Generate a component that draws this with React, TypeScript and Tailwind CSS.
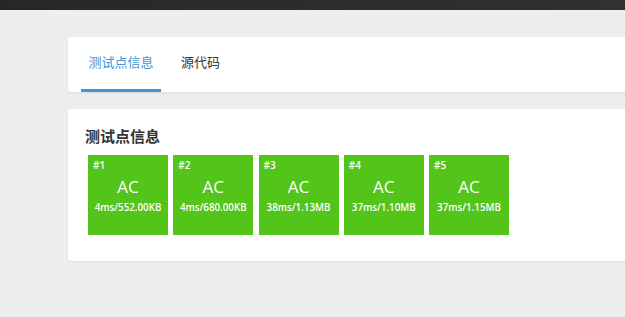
import React from "react";

const CASES = [
  { id: 1, status: "AC", info: "4ms/552.00KB" },
  { id: 2, status: "AC", info: "4ms/680.00KB" },
  { id: 3, status: "AC", info: "38ms/1.13MB" },
  { id: 4, status: "AC", info: "37ms/1.10MB" },
  { id: 5, status: "AC", info: "37ms/1.15MB" },
];

const font = { fontFamily: '"Open Sans", "Noto Sans CJK SC", sans-serif' };

export default function App() {
  return (
    <div className="w-[625px] h-[317px] overflow-hidden bg-[#eeeeee]" style={font}>
      <div className="h-[10px] bg-gradient-to-r from-[#25272a] to-[#303134]" />

      <div className="ml-[68px] w-[600px] pt-[27px]">
        {/* tabs */}
        <div className="h-[55px] bg-white rounded-[3px] shadow-[0_1px_3px_rgba(0,0,0,0.08)] flex items-end pl-[13px]">
          <div className="w-[80px] h-full flex items-center justify-center text-[13px] text-[#3b97d7] border-b-[3px] border-[#3b97d7]">
            测试点信息
          </div>
          <div className="h-full flex items-center px-[20px] pb-[3px] text-[13px] text-[#333]">
            源代码
          </div>
        </div>

        {/* test cases */}
        <div className="mt-[17px] h-[152px] bg-white rounded-[3px] shadow-[0_1px_3px_rgba(0,0,0,0.08)] pl-[20px] pt-[17px]">
          <div className="-ml-[3px] text-[15px] leading-[20px] font-bold text-[#333]">测试点信息</div>
          <div className="mt-[9px] flex gap-[5.25px]">
            {CASES.map((c) => (
              <div key={c.id} className="w-[80px] h-[80px] bg-[#52c41a] text-white relative flex flex-col items-center">
                <div className="absolute left-[5px] top-[4px] text-[10px] font-semibold leading-[12px]">#{c.id}</div>
                <div className="mt-[21px] text-[17px] leading-[22px]">{c.status}</div>
                <div className="mt-[4px] text-[9.75px] font-semibold leading-[12px]">{c.info}</div>
              </div>
            ))}
          </div>
        </div>
      </div>
    </div>
  );
}
